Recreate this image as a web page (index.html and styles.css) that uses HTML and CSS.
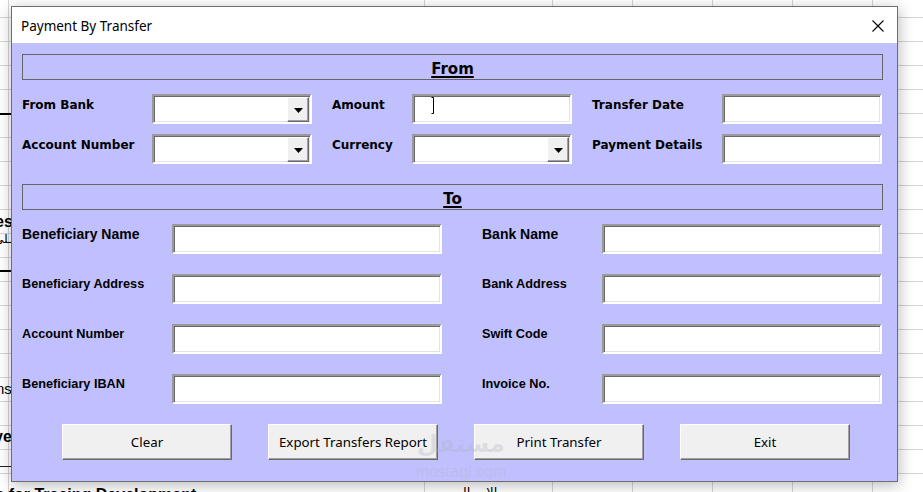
FILE: index.html
```html
<!DOCTYPE html>
<html>
<head>
<meta charset="utf-8">
<link rel="stylesheet" href="styles.css">
</head>
<body>
<div class="sheet">
  <span class="bg-txt bg-es">es</span>
  <span class="bg-txt bg-ar1">ـلي</span>
  <span class="bg-txt bg-ns">ns</span>
  <span class="bg-txt bg-ve">ve</span>
  <span class="bg-txt bg-bottom">ts for Tracing Development</span>
  <span class="bg-txt bg-ar2">الإجمالي</span>

  <div class="dialog">
    <div class="titlebar">
      <span class="title">Payment By Transfer</span>
      <svg class="close" width="12" height="12" viewBox="0 0 12 12"><path d="M0.5 0.5 L11.5 11.5 M11.5 0.5 L0.5 11.5" stroke="#000" stroke-width="1.1" fill="none"/></svg>
    </div>
    <div class="body">
      <div class="section-head"><span>From</span></div>
      <div class="from-grid">
        <div class="lbl-f">From Bank</div>
        <div class="field combo"><div class="drop"><svg width="9" height="5" viewBox="0 0 9 5"><polygon points="0,0 9,0 4.5,5" fill="#000"/></svg></div></div>
        <div class="lbl-f pad">Amount</div>
        <div class="field has-caret"><svg class="caret" width="4" height="17" viewBox="0 0 4 17"><path d="M0.5 0.5 H2.5 V16.5 H0.5" stroke="#000" stroke-width="1" fill="none"/></svg></div>
        <div class="lbl-f pad">Transfer Date</div>
        <div class="field"></div>

        <div class="lbl-f">Account Number</div>
        <div class="field combo"><div class="drop"><svg width="9" height="5" viewBox="0 0 9 5"><polygon points="0,0 9,0 4.5,5" fill="#000"/></svg></div></div>
        <div class="lbl-f pad">Currency</div>
        <div class="field combo"><div class="drop"><svg width="9" height="5" viewBox="0 0 9 5"><polygon points="0,0 9,0 4.5,5" fill="#000"/></svg></div></div>
        <div class="lbl-f pad">Payment Details</div>
        <div class="field"></div>
      </div>

      <div class="section-head to-head"><span>To</span></div>
      <div class="to-grid">
        <div class="lbl-t big">Beneficiary Name</div>
        <div class="field"></div>
        <div class="lbl-t big pad">Bank Name</div>
        <div class="field"></div>

        <div class="lbl-t">Beneficiary Address</div>
        <div class="field"></div>
        <div class="lbl-t pad">Bank Address</div>
        <div class="field"></div>

        <div class="lbl-t">Account Number</div>
        <div class="field"></div>
        <div class="lbl-t pad">Swift Code</div>
        <div class="field"></div>

        <div class="lbl-t">Beneficiary IBAN</div>
        <div class="field"></div>
        <div class="lbl-t pad">Invoice No.</div>
        <div class="field"></div>
      </div>

      <div class="btns">
        <div class="btn">Clear</div>
        <div class="btn">Export Transfers Report</div>
        <div class="btn">Print Transfer</div>
        <div class="btn">Exit</div>
      </div>
    </div>
  </div>

  <div class="watermark">
    <span class="wm-ar">مستقل</span>
    <span class="wm-en">mostaql.com</span>
  </div>
</div>
</body>
</html>
```

FILE: styles.css
```css
* { box-sizing: border-box; }
html, body { margin: 0; padding: 0; }
body {
  width: 923px;
  height: 492px;
  overflow: hidden;
  background: #fff;
  font-family: "Noto Sans", sans-serif;
}

.sheet {
  position: relative;
  width: 923px;
  height: 492px;
  background-color: #fff;
  background-image:
    linear-gradient(#000, #000),
    linear-gradient(#000, #000),
    linear-gradient(#222, #222),
    linear-gradient(#d4d4d4, #d4d4d4),
    linear-gradient(#d4d4d4, #d4d4d4),
    linear-gradient(#d4d4d4, #d4d4d4),
    linear-gradient(#d4d4d4, #d4d4d4),
    linear-gradient(#d4d4d4, #d4d4d4),
    linear-gradient(#d4d4d4, #d4d4d4),
    linear-gradient(#d4d4d4, #d4d4d4),
    linear-gradient(#d4d4d4 1px, transparent 1px);
  background-size:
    11px 2px,
    11px 2px,
    11px 1px,
    1px 100%,
    1px 100%,
    1px 100%,
    1px 100%,
    1px 100%,
    1px 100%,
    1px 100%,
    100% 24px;
  background-position:
    0 113px,
    0 270px,
    0 466px,
    8px 0,
    424px 0,
    552px 0,
    632px 0,
    712px 0,
    792px 0,
    872px 0,
    0 17px;
  background-repeat:
    no-repeat, no-repeat, no-repeat, no-repeat, no-repeat, no-repeat,
    no-repeat, no-repeat, no-repeat, no-repeat, repeat;
}

.bg-txt {
  position: absolute;
  white-space: nowrap;
  color: #000;
  font-family: "Liberation Sans", sans-serif;
}
.bg-es { left: -5px; top: 213px; font-weight: bold; font-size: 16px; }
.bg-ar1 { left: -6px; top: 232px; font-family: "DejaVu Sans", sans-serif; font-size: 12px; }
.bg-ns { left: -4px; top: 380px; font-size: 15px; }
.bg-ve { left: -6px; top: 428px; font-weight: bold; font-size: 16px; }
.bg-bottom { left: -10px; top: 486px; font-weight: bold; font-size: 16px; }
.bg-ar2 { left: 452px; top: 485px; font-family: "DejaVu Sans", sans-serif; font-size: 13px; }

.dialog {
  position: absolute;
  left: 11px;
  top: 6px;
  width: 887px;
  height: 476px;
  border: 1px solid #6e6e6e;
  background: #c0c0ff;
  box-shadow: 1px 3px 14px rgba(0, 0, 0, 0.28);
  display: flex;
  flex-direction: column;
}

.titlebar {
  height: 36px;
  flex: none;
  background: #fff;
  display: flex;
  align-items: center;
  justify-content: space-between;
  padding: 1px 13px 0 9px;
}
.title {
  font-family: "Noto Sans", sans-serif;
  font-size: 13.5px;
  color: #000;
}
.close { display: block; }

.body {
  padding: 11px 14px 0 10px;
}

.section-head {
  height: 26px;
  border: 1px solid #646464;
  text-align: center;
  font-family: "DejaVu Sans", sans-serif;
  font-weight: bold;
  font-size: 15px;
  line-height: 24px;
  padding-top: 2px;
  color: #000;
}
.section-head span {
  text-decoration: underline;
  text-decoration-thickness: 1.5px;
  text-underline-offset: 2px;
}
.to-head { margin-top: 20px; }

.from-grid {
  display: grid;
  grid-template-columns: 130px 160px 100px 160px 150px 160px;
  grid-auto-rows: 30px;
  row-gap: 10px;
  margin-top: 14px;
}
.lbl-f {
  font-family: "DejaVu Sans", sans-serif;
  font-weight: bold;
  font-size: 12px;
  line-height: 20px;
  padding-top: 1px;
  color: #000;
  white-space: nowrap;
}
.lbl-f.pad { padding-left: 20px; }

.to-grid {
  display: grid;
  grid-template-columns: 150px 270px 160px 280px;
  grid-auto-rows: 30px;
  row-gap: 20px;
  margin-top: 14px;
}
.lbl-t {
  font-family: "Liberation Sans", sans-serif;
  font-weight: bold;
  font-size: 12.7px;
  line-height: 20px;
  color: #000;
  white-space: nowrap;
}
.lbl-t.big { font-size: 14px; }
.lbl-t.pad { padding-left: 40px; }

.field {
  height: 30px;
  background: #fff;
  border: 2px solid;
  border-color: #9a9a9a #ffffff #ffffff #9a9a9a;
  box-shadow: inset 1px 1px 0 #6a6a6a, inset -1px -1px 0 #e3e3e3;
}
.combo {
  display: flex;
  justify-content: flex-end;
  align-items: flex-start;
  padding: 1px 1px 0 0;
}
.drop {
  width: 22px;
  height: 25px;
  background: #f0f0f0;
  border: 1px solid;
  border-color: #ffffff #696969 #696969 #ffffff;
  box-shadow: inset -1px -1px 0 #a0a0a0;
  display: flex;
  align-items: center;
  justify-content: center;
  padding-top: 2px;
}
.drop svg { display: block; }

.has-caret { position: relative; }
.caret {
  position: absolute;
  left: 17px;
  top: 1px;
}

.btns {
  display: flex;
  gap: 36px;
  padding-left: 40px;
  margin-top: 20px;
}
.btn {
  width: 170px;
  height: 36px;
  background: #f0f0f0;
  border: 1px solid;
  border-color: #ffffff #696969 #696969 #ffffff;
  box-shadow: inset -1px -1px 0 #a0a0a0;
  display: flex;
  align-items: center;
  justify-content: center;
  font-family: "Noto Sans", sans-serif;
  font-size: 13.3px;
  color: #000;
  white-space: nowrap;
}

.watermark {
  position: absolute;
  left: 404px;
  top: 424px;
  width: 114px;
  display: flex;
  flex-direction: column;
  align-items: center;
  color: rgba(180, 180, 195, 0.35);
  pointer-events: none;
}
.wm-ar {
  font-family: "DejaVu Sans", sans-serif;
  font-weight: bold;
  font-size: 24px;
  line-height: 40px;
}
.wm-en {
  font-family: "Liberation Sans", sans-serif;
  font-size: 16px;
  line-height: 16px;
}
```
